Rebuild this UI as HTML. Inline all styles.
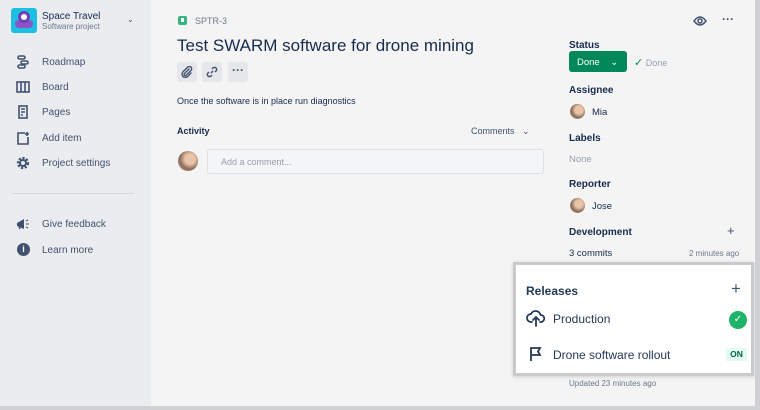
<!DOCTYPE html>
<html><head><style>
*{box-sizing:border-box;margin:0;padding:0}
body{width:760px;height:410px;overflow:hidden;background:#f4f4f5;font-family:"Liberation Sans",sans-serif;color:#172b4d;position:relative}
.sb{position:absolute;left:0;top:0;width:151px;height:410px;background:#ebecf0}
.abs{position:absolute}
.nav{position:absolute;left:42px;font-size:10px;color:#42526e}
.ic{position:absolute;left:16px}
.lbl{position:absolute;left:569px;font-size:10px;font-weight:bold;color:#172b4d}
.av{position:absolute;border-radius:50%;background:radial-gradient(circle at 60% 40%,#e8c5a8 0 30%,#8a6a5a 60%,#d9b8a0)}
.tb{position:absolute;top:62px;width:20px;height:20px;background:#e6e7ea;border-radius:3px}
</style></head><body>
<div class="sb"></div>
<div class="abs" style="left:11px;top:8px;width:26px;height:25px;background:#1dc0e0;border-radius:3px"></div>
<div class="abs" style="left:15px;top:20px;width:18px;height:8px;background:#8b55c9;border-radius:9px"></div>
<div class="abs" style="left:18px;top:11px;width:12px;height:12px;background:#fff;border:3px solid #6f3fb8;border-radius:50%"></div>
<div class="abs" style="left:42px;top:11px;font-size:10px;color:#172b4d">Space Travel</div>
<div class="abs" style="left:42px;top:22px;font-size:8px;color:#6b778c">Software project</div>
<div class="abs" style="left:127px;top:15px;font-size:8px;color:#42526e">⌄</div>
<svg class="ic" style="top:55px" width="14" height="14" viewBox="0 0 14 14" fill="none" stroke="#42526e" stroke-width="1.6"><rect x="2" y="1" width="7" height="3" rx="1.5"/><rect x="5" y="6" width="7" height="3" rx="1.5"/><rect x="2" y="10" width="7" height="3" rx="1.5"/></svg>
<div class="nav" style="top:57px">Roadmap</div>
<svg class="ic" style="top:80px" width="14" height="14" viewBox="0 0 14 14" fill="none" stroke="#42526e" stroke-width="1.6"><rect x="1" y="2" width="12" height="10"/><path d="M5 2v10M9 2v10"/></svg>
<div class="nav" style="top:82px">Board</div>
<svg class="ic" style="top:105px" width="14" height="14" viewBox="0 0 14 14" fill="none" stroke="#42526e" stroke-width="1.6"><rect x="3" y="1" width="8" height="12"/><path d="M5 4h4M5 7h4M5 10h2"/></svg>
<div class="nav" style="top:107px">Pages</div>
<svg class="ic" style="top:131px" width="14" height="14" viewBox="0 0 14 14" fill="none" stroke="#42526e" stroke-width="1.6"><path d="M9 2H2v11h10V6"/><path d="M11 1v4M9 3h4"/></svg>
<div class="nav" style="top:133px">Add item</div>
<svg class="ic" style="top:156px" width="14" height="14" viewBox="0 0 14 14" fill="none" stroke="#42526e" stroke-width="2.2" stroke-dasharray="2.2 1.6"><circle cx="7" cy="7" r="5"/></svg>
<div class="abs" style="left:19px;top:159px;width:8px;height:8px;border-radius:50%;border:2px solid #42526e"></div>
<div class="nav" style="top:158px">Project settings</div>
<div class="abs" style="left:12px;top:193px;width:122px;height:1px;background:#d5d7dd"></div>
<svg class="ic" style="top:218px" width="14" height="12" viewBox="0 0 14 12"><path d="M1 5l7-4v10l-7-3z" fill="#42526e"/><path d="M3 8l1 3" stroke="#42526e" stroke-width="1.5"/><path d="M10 3l2-1M10 6h3M10 9l2 1" stroke="#42526e" stroke-width="1"/></svg>
<div class="nav" style="top:219px">Give feedback</div>
<div class="abs" style="left:17px;top:243px;width:13px;height:13px;border-radius:50%;background:#42526e;color:#fff;font-size:9px;font-weight:bold;text-align:center;line-height:13px">i</div>
<div class="nav" style="top:245px">Learn more</div>

<div class="abs" style="left:178px;top:16px;width:9px;height:9px;background:#36b37e;border-radius:2px"></div>
<div class="abs" style="left:181px;top:18px;width:3px;height:4px;background:#fff"></div>
<div class="abs" style="left:195px;top:16px;font-size:9px;color:#6b778c">SPTR-3</div>
<div class="abs" style="left:177px;top:36px;font-size:17px;color:#172b4d">Test SWARM software for drone mining</div>
<div class="tb" style="left:177px"></div>
<svg class="abs" style="left:181px;top:66px" width="12" height="12" viewBox="0 0 12 12" fill="none" stroke="#42526e" stroke-width="1.4" stroke-linecap="round"><path d="M8 3L3.5 7.5a1.2 1.2 0 0 0 1.7 1.7L10 4.4a2.3 2.3 0 0 0-3.3-3.3L2 5.8a3.3 3.3 0 0 0 4.7 4.7L10 7"/></svg>
<div class="tb" style="left:202px"></div>
<svg class="abs" style="left:206px;top:66px" width="12" height="12" viewBox="0 0 12 12" fill="none" stroke="#42526e" stroke-width="1.5"><path d="M5 7l2-2"/><path d="M6 3l1-1a2 2 0 0 1 3 3l-1 1"/><path d="M6 9l-1 1a2 2 0 0 1-3-3l1-1"/></svg>
<div class="tb" style="left:228px"></div>
<div class="abs" style="left:228px;top:62px;width:20px;text-align:center;font-size:12px;line-height:17px;color:#42526e;font-weight:bold">···</div>
<div class="abs" style="left:177px;top:96px;font-size:9px;color:#172b4d">Once the software is in place run diagnostics</div>
<div class="abs" style="left:177px;top:126px;font-size:9px;font-weight:bold">Activity</div>
<div class="abs" style="left:471px;top:126px;font-size:9px;color:#42526e">Comments &nbsp;&nbsp;⌄</div>
<div class="av" style="left:178px;top:151px;width:20px;height:20px"></div>
<div class="abs" style="left:207px;top:149px;width:337px;height:25px;border:1px solid #dfe1e6;background:#f4f5f7;border-radius:3px;font-size:9px;color:#97a0af;padding:7px 13px">Add a comment...</div>

<svg class="abs" style="left:693px;top:15px" width="14" height="12" viewBox="0 0 14 12" fill="none" stroke="#42526e" stroke-width="1.5"><path d="M1 6Q7-2 13 6Q7 14 1 6Z"/><circle cx="7" cy="6" r="2"/></svg>
<div class="abs" style="left:722px;top:12px;font-size:12px;font-weight:bold;color:#42526e">···</div>

<div class="lbl" style="top:40px">Status</div>
<div class="abs" style="left:569px;top:51px;width:58px;height:21px;background:#00875a;border-radius:3px;color:#fff;font-size:9.5px;padding:6px 8px">Done &nbsp;&nbsp;&nbsp;⌄</div>
<div class="abs" style="left:634px;top:56px;font-size:9px;color:#97a0af"><span style="color:#00875a;font-size:11px">✓</span> Done</div>
<div class="lbl" style="top:85px">Assignee</div>
<div class="av" style="left:570px;top:104px;width:15px;height:15px"></div>
<div class="abs" style="left:592px;top:107px;font-size:9.5px">Mia</div>
<div class="lbl" style="top:133px">Labels</div>
<div class="abs" style="left:569px;top:154px;font-size:9.5px;color:#97a0af">None</div>
<div class="lbl" style="top:179px">Reporter</div>
<div class="av" style="left:570px;top:198px;width:15px;height:15px"></div>
<div class="abs" style="left:592px;top:201px;font-size:9.5px">Jose</div>
<div class="lbl" style="top:227px">Development</div>
<div class="abs" style="left:727px;top:223px;font-size:13px;color:#42526e">+</div>
<div class="abs" style="left:569px;top:248px;font-size:9.5px">3 commits</div>
<div class="abs" style="left:689px;top:249px;font-size:8px;color:#6b778c">2 minutes ago</div>
<div class="abs" style="left:569px;top:379px;font-size:8px;color:#6b778c">Updated 23 minutes ago</div>

<div class="abs" style="left:513px;top:262px;width:241px;height:114px;background:#fff;border:3px solid #c9cacc;box-shadow:0 1px 4px rgba(0,0,0,.15)"></div>
<div class="abs" style="left:526px;top:284px;font-size:12px;font-weight:bold;color:#253858">Releases</div>
<div class="abs" style="left:731px;top:279px;font-size:17px;color:#42526e;font-weight:300">+</div>
<svg class="abs" style="left:526px;top:310px" width="20" height="17" viewBox="0 0 20 17" fill="none" stroke="#253858" stroke-width="1.8" stroke-linecap="round" stroke-linejoin="round"><path d="M6 12H5a4 4 0 0 1 0-8 5 5 0 0 1 9.5 1A3.5 3.5 0 0 1 15 12h-1"/><path d="M10 16V7M7 10l3-3 3 3"/></svg>
<div class="abs" style="left:553px;top:312px;font-size:12px;color:#253858">Production</div>
<div class="abs" style="left:729px;top:311px;width:18px;height:18px;border-radius:50%;background:#1fb46a;color:#fff;font-size:10px;text-align:center;line-height:18px">✓</div>
<svg class="abs" style="left:529px;top:346px" width="14" height="16" viewBox="0 0 14 16" fill="none" stroke="#253858" stroke-width="1.8"><path d="M2 15V2h9l-2 3.5 2 3.5H2"/></svg>
<div class="abs" style="left:553px;top:348px;font-size:12px;color:#253858">Drone software rollout</div>
<div class="abs" style="left:726px;top:348px;width:21px;height:13px;background:#e3fcef;color:#006644;font-size:8.5px;font-weight:bold;text-align:center;line-height:13px">ON</div>

<div class="abs" style="left:755px;top:0;width:5px;height:410px;background:#d0d1d4"></div>
<div class="abs" style="left:0;top:406px;width:760px;height:4px;background:#d0d1d4"></div>
</body></html>
